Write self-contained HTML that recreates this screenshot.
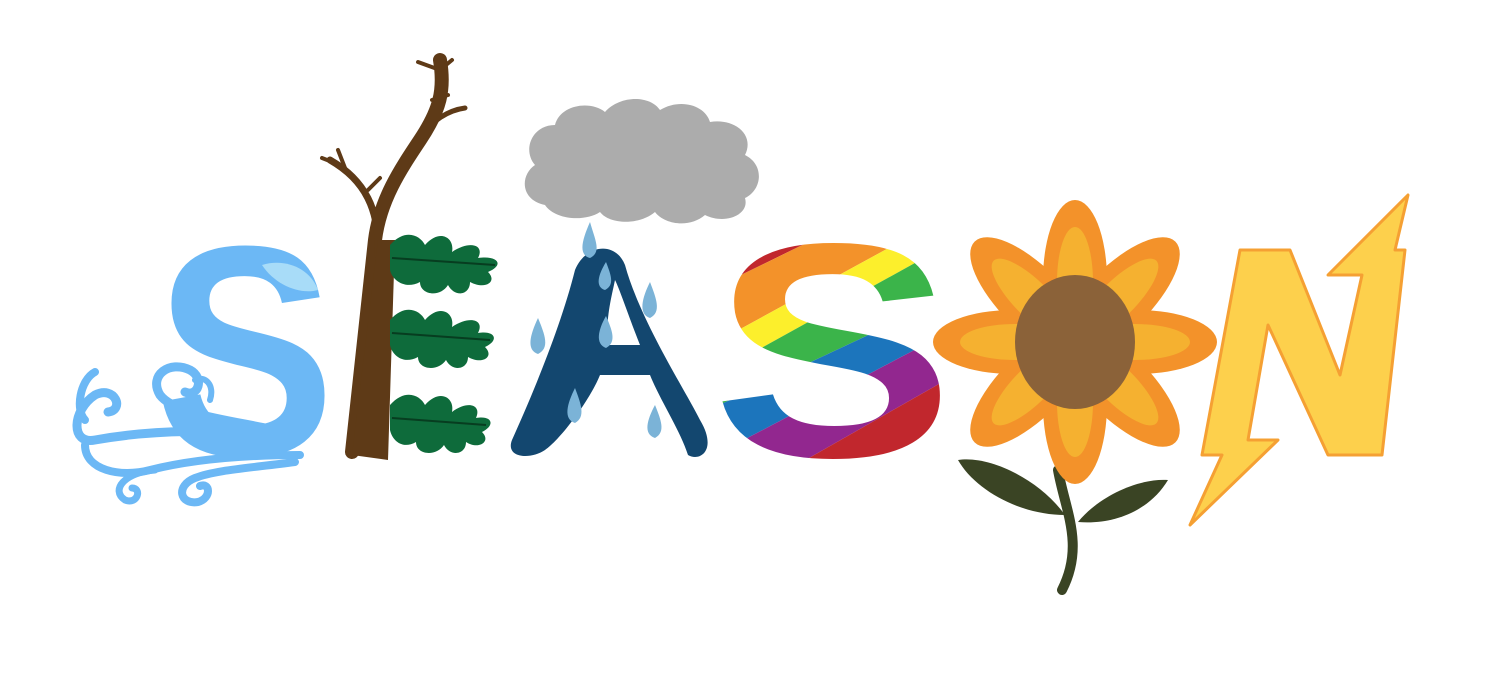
<!DOCTYPE html>
<html><head><meta charset="utf-8"><style>
html,body{margin:0;padding:0;background:#fff;width:1495px;height:679px;overflow:hidden}
svg{display:block}
text{font-family:"Liberation Sans",sans-serif;font-weight:bold}
</style></head><body>
<svg width="1495" height="679" viewBox="0 0 1495 679" xmlns="http://www.w3.org/2000/svg">
<defs>
<clipPath id="s2"><text x="712" y="456" font-size="305" transform="translate(712 456) scale(1.19 1) translate(-712 -456)">S</text></clipPath>
</defs>

<!-- wind -->
<g fill="none" stroke="#6cb8f5" stroke-linecap="round">
<path d="M290 438 C220 428 150 430 95 440 C70 445 72 410 95 395 C115 385 125 410 108 412" stroke-width="9"/>
<path d="M300 455 C240 455 190 460 150 470 C120 478 85 470 85 445 M95 372 C80 380 75 410 85 420" stroke-width="8"/>
<path d="M285 432 C230 420 175 415 160 395 C148 375 170 360 190 370 C205 378 198 398 185 392" stroke-width="9"/>
<path d="M210 400 C215 385 205 375 195 380" stroke-width="6"/>
<path d="M295 462 C250 468 215 470 195 478 C175 486 180 505 198 502 C212 498 210 482 200 486" stroke-width="8"/>
<path d="M155 470 C125 472 110 490 125 500 C138 505 142 488 132 488" stroke-width="7"/>
</g>

<!-- blue S -->
<text x="155" y="455" font-size="300" fill="#6cb8f5" transform="translate(155 455) scale(0.9 1) translate(-155 -455)">S</text>
<path d="M262 265 C285 258 310 268 318 290 C300 295 275 285 262 265Z" fill="#a8dcf8"/>

<!-- tree -->
<g fill="none" stroke="#5e3a17" stroke-linecap="round">
<path d="M352 452 L375 240 C380 200 400 170 420 140 C440 110 445 90 440 60" stroke-width="14"/>
<path d="M378 255 C380 210 365 180 330 160" stroke-width="7"/>
<path d="M420 140 C430 120 450 110 465 108" stroke-width="5"/>
<path d="M440 70 L418 62 M440 70 L452 60 M345 168 L338 150 M340 165 L322 158 M368 190 L380 178 M432 100 L448 95" stroke-width="4"/>
</g>
<polygon points="352,455 388,460 395,240 378,240" fill="#5e3a17"/>

<!-- oak leaves -->
<g fill="#0e6b3b">
<path d="M390 245 C405 228 420 235 425 245 C440 228 455 238 452 252 C470 240 485 245 478 258 C498 255 505 265 488 272 C498 282 485 290 470 282 C470 295 455 298 448 285 C440 298 420 295 420 282 C405 290 392 280 390 270Z"/>
<path d="M390 320 C405 303 420 310 425 320 C440 303 455 313 452 327 C470 315 485 320 478 333 C495 330 500 340 485 347 C495 357 482 365 468 357 C468 370 452 372 446 360 C438 372 418 370 418 357 C403 365 392 355 390 345Z"/>
<path d="M390 405 C405 388 420 395 425 405 C440 388 455 398 452 412 C468 400 482 405 476 418 C492 415 496 425 482 432 C492 442 478 450 466 442 C466 455 450 457 444 445 C436 457 416 455 416 442 C402 450 392 440 390 430Z"/>
</g>
<g stroke="#073d20" stroke-width="2">
<line x1="392" y1="258" x2="495" y2="265"/><line x1="392" y1="333" x2="490" y2="340"/><line x1="392" y1="418" x2="486" y2="425"/>
</g>

<!-- cloud -->
<path d="M545 205 C520 200 520 175 535 165 C522 150 532 125 555 125 C560 105 590 100 605 112 C620 95 650 95 660 110 C680 98 705 105 710 122 C735 118 755 135 745 155 C765 165 762 190 745 198 C750 215 725 225 705 215 C690 228 665 225 655 212 C640 225 610 225 600 212 C585 222 555 220 545 205Z" fill="#acacac"/>

<!-- A -->
<path d="M512 440 C530 400 560 330 575 270 C585 245 615 240 625 265 C640 320 685 390 700 420 C718 450 700 462 688 455 C680 430 660 400 650 375 L600 375 C590 400 560 440 545 450 C530 460 505 458 512 440Z M608 345 L640 345 C630 320 620 290 615 280 C612 295 605 320 608 345Z" fill="#13476f"/>
<g fill="#7bb3d7">
<path d="M590 222 C595 240 602 252 590 258 C578 255 582 240 590 222Z"/>
<path d="M538 318 C545 335 550 348 538 354 C526 350 530 335 538 318Z"/>
<path d="M606 262 C611 275 615 285 605 290 C595 287 598 275 606 262Z"/>
<path d="M650 282 C656 298 662 312 650 318 C638 314 642 298 650 282Z"/>
<path d="M606 316 C612 330 617 342 606 348 C595 344 598 330 606 316Z"/>
<path d="M575 388 C581 404 586 417 575 423 C563 419 567 404 575 388Z"/>
<path d="M655 405 C661 420 666 432 655 438 C643 434 647 420 655 405Z"/>
</g>

<!-- rainbow S -->
<g clip-path="url(#s2)">
<polygon points="700,150 960,100 960,168 700,295" fill="#c1272d"/>
<polygon points="700,295 960,168 960,209 700,351" fill="#f3922a"/>
<polygon points="700,351 960,209 960,238 700,382" fill="#fcef2c"/>
<polygon points="700,382 960,238 960,292 700,414" fill="#3bb44a"/>
<polygon points="700,414 960,292 960,326 700,463" fill="#1c75bc"/>
<polygon points="700,463 960,326 960,372 700,520" fill="#92278f"/>
<polygon points="700,520 960,372 960,560 700,560" fill="#c1272d"/>
</g>

<!-- sunflower stem & leaves -->
<path d="M1058 470 C1065 510 1085 545 1062 590" fill="none" stroke="#3a4424" stroke-width="10" stroke-linecap="round"/>
<path d="M1065 515 C1040 480 990 455 958 460 C975 490 1020 515 1065 515Z" fill="#3a4424"/>
<path d="M1078 522 C1100 495 1140 478 1168 480 C1150 510 1115 525 1078 522Z" fill="#3a4424"/>

<!-- petals -->
<g transform="translate(1075 342)">
<g fill="#f3922a">
<ellipse rx="32" ry="80" cy="-62"/>
<ellipse rx="32" ry="80" cy="62"/>
<ellipse rx="32" ry="80" cy="-62" transform="rotate(45)"/>
<ellipse rx="32" ry="80" cy="-62" transform="rotate(90)"/>
<ellipse rx="32" ry="80" cy="-62" transform="rotate(135)"/>
<ellipse rx="32" ry="80" cy="-62" transform="rotate(225)"/>
<ellipse rx="32" ry="80" cy="-62" transform="rotate(270)"/>
<ellipse rx="32" ry="80" cy="-62" transform="rotate(315)"/>
</g>
<g fill="#f5b130">
<ellipse rx="18" ry="55" cy="-60"/>
<ellipse rx="18" ry="55" cy="60"/>
<ellipse rx="18" ry="55" cy="-60" transform="rotate(45)"/>
<ellipse rx="18" ry="55" cy="-60" transform="rotate(90)"/>
<ellipse rx="18" ry="55" cy="-60" transform="rotate(135)"/>
<ellipse rx="18" ry="55" cy="-60" transform="rotate(225)"/>
<ellipse rx="18" ry="55" cy="-60" transform="rotate(270)"/>
<ellipse rx="18" ry="55" cy="-60" transform="rotate(315)"/>
</g>
<ellipse rx="60" ry="67" fill="#8b6239"/>
</g>

<!-- N lightning -->
<path d="M1240 250 L1290 250 L1340 375 L1362 275 L1328 275 L1408 195 L1395 250 L1405 250 L1382 455 L1328 455 L1268 325 L1248 440 L1278 440 L1190 525 L1222 455 L1202 455Z" fill="#fdd04c" stroke="#f5a033" stroke-width="3" stroke-linejoin="round"/>
</svg>
</body></html>
